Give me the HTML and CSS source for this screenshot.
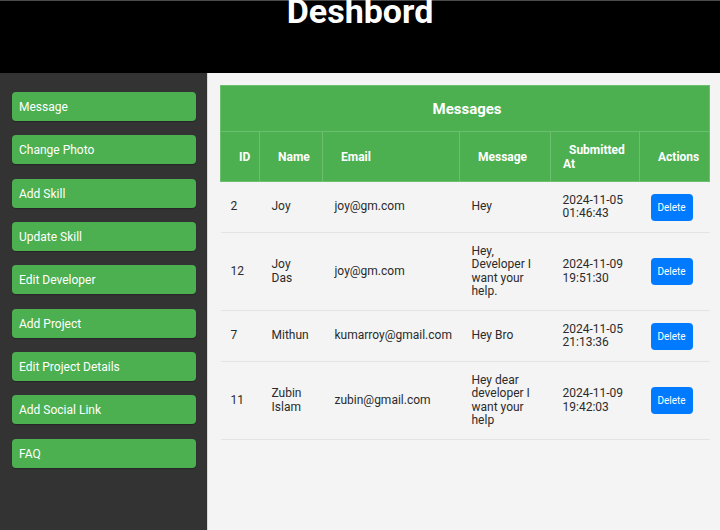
FILE: index.html
```html
<!DOCTYPE html>
<html>
<head>
<meta charset="utf-8">
<title>Deshbord</title>
<link rel="stylesheet" href="styles.css">
</head>
<body>
<header class="topbar">
  <h1 class="title">Deshbord</h1>
</header>
<div class="layout">
  <nav class="sidebar">
    <a class="nav-btn">Message</a>
    <a class="nav-btn">Change Photo</a>
    <a class="nav-btn">Add Skill</a>
    <a class="nav-btn">Update Skill</a>
    <a class="nav-btn">Edit Developer</a>
    <a class="nav-btn">Add Project</a>
    <a class="nav-btn">Edit Project Details</a>
    <a class="nav-btn">Add Social Link</a>
    <a class="nav-btn">FAQ</a>
  </nav>
  <main class="content">
    <table class="msg-table">
      <colgroup>
        <col class="c-id">
        <col class="c-name">
        <col class="c-email">
        <col class="c-msg">
        <col class="c-date">
        <col class="c-act">
      </colgroup>
      <thead>
        <tr><th colspan="6" class="caption">Messages</th></tr>
        <tr class="head-row">
          <th>ID</th>
          <th>Name</th>
          <th>Email</th>
          <th>Message</th>
          <th>Submitted At</th>
          <th>Actions</th>
        </tr>
      </thead>
      <tbody>
        <tr>
          <td>2</td><td>Joy</td><td>joy@gm.com</td><td>Hey</td>
          <td>2024-11-05 01:46:43</td><td><button class="del">Delete</button></td>
        </tr>
        <tr>
          <td>12</td><td>Joy Das</td><td>joy@gm.com</td><td>Hey, Developer I want your help.</td>
          <td>2024-11-09 19:51:30</td><td><button class="del">Delete</button></td>
        </tr>
        <tr>
          <td>7</td><td>Mithun</td><td>kumarroy@gmail.com</td><td>Hey Bro</td>
          <td>2024-11-05 21:13:36</td><td><button class="del">Delete</button></td>
        </tr>
        <tr>
          <td>11</td><td>Zubin Islam</td><td>zubin@gmail.com</td><td>Hey dear developer I want your help</td>
          <td>2024-11-09 19:42:03</td><td><button class="del">Delete</button></td>
        </tr>
      </tbody>
    </table>
  </main>
</div>
</body>
</html>
```
FILE: styles.css
```css
* { box-sizing: border-box; }
html, body { height: 100%; }
body {
  margin: 0;
  font-family: Roboto, "Liberation Sans", Arial, sans-serif;
  background: #f4f4f4;
  overflow: hidden;
}
.topbar {
  background: #000;
  border-top: 1px solid #4a4a4a;
  height: 73px;
  text-align: center;
  color: #fff;
}
.title {
  margin: -10px 0 0;
  font-size: 34px;
  font-weight: 700;
  line-height: normal;
}
.layout {
  display: flex;
  height: calc(100% - 73px);
}
.sidebar {
  width: 208px;
  flex: none;
  background: #333;
  border-right: 1px solid #d8d8d8;
  padding: 19px 11px 0 12px;
  display: flex;
  flex-direction: column;
  gap: 14.33px;
}
.nav-btn {
  display: block;
  height: 29px;
  line-height: 29px;
  padding: 1px 7px 0;
  background: #4caf50;
  color: #fff;
  font-size: 12px;
  border-radius: 4px;
  box-shadow: 0 1px 1px rgba(0,0,0,0.25);
}
.content {
  flex: 1;
  padding: 12px 11px 12px 12px;
}
.msg-table {
  width: 489px;
  table-layout: fixed;
  border-collapse: collapse;
  font-size: 12px;
  color: #2b2b2b;
}
.c-id { width: 39px; }
.c-name { width: 63px; }
.c-email { width: 137px; }
.c-msg { width: 91px; }
.c-date { width: 89px; }
.c-act { width: 70px; }
.msg-table th {
  background: #4caf50;
  color: #fff;
  font-weight: 700;
  border: 1px solid #6dbf70;
}
.caption {
  font-size: 15px;
  text-align: center;
  height: 46px;
  padding: 0 0 0 4px;
}
.head-row th {
  text-align: left;
  padding: 10px 8px 10px 12px;
  text-indent: 6px;
  height: 50px;
  line-height: 14px;
}
.msg-table td {
  padding: 11.5px 12px 11.5px 12px;
  border-bottom: 1px solid #e4e4e4;
  vertical-align: middle;
  line-height: 13.5px;
}
.msg-table td:first-child {
  padding-left: 10px;
}
.del {
  background: #007bff;
  color: #fff;
  border: none;
  border-radius: 4px;
  font-family: Roboto, "Liberation Sans", Arial, sans-serif;
  font-size: 10px;
  line-height: 13px;
  padding: 7px 7px;
  width: 42px;
  height: 27px;
  margin-left: -1px;
}
```
